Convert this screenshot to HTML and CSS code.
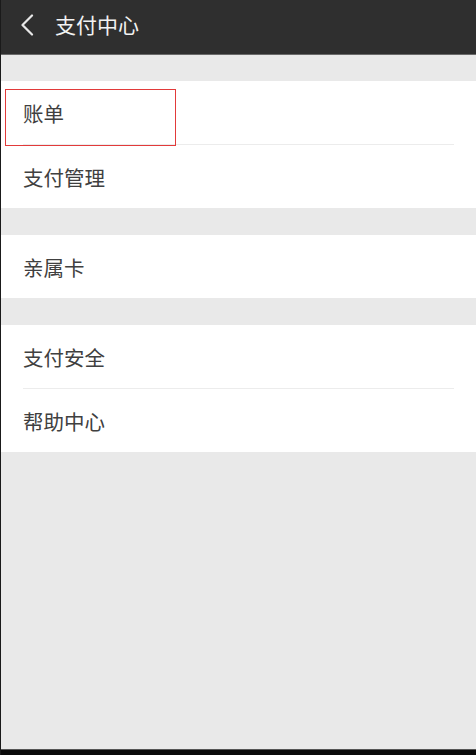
FILE: index.html
```html
<!DOCTYPE html>
<html lang="zh">
<head>
<meta charset="utf-8">
<title>支付中心</title>
<link rel="stylesheet" href="styles.css">
</head>
<body>
<div class="screen">
  <header class="topbar">
    <span class="back">
      <svg width="14" height="22" viewBox="0 0 14 22"><path d="M12 1.5 L2.5 11 L12 20.5" fill="none" stroke="#e8e8e8" stroke-width="2.2" stroke-linecap="round" stroke-linejoin="round"/></svg>
    </span>
    <span class="title">支付中心</span>
  </header>
  <div class="gap"></div>
  <section class="group">
    <div class="row row-focus"><span class="label">账单</span><span class="focus"></span></div>
    <div class="row"><span class="label">支付管理</span></div>
  </section>
  <div class="gap"></div>
  <section class="group">
    <div class="row"><span class="label">亲属卡</span></div>
  </section>
  <div class="gap"></div>
  <section class="group">
    <div class="row"><span class="label">支付安全</span></div>
    <div class="row"><span class="label">帮助中心</span></div>
  </section>
  <div class="fill"></div>
  <div class="bottombar"></div>
</div>
</body>
</html>
```
FILE: styles.css
```css
html, body {
  margin: 0;
  padding: 0;
  height: 100%;
}
body {
  font-family: "Noto Sans CJK SC", "Noto Sans", sans-serif;
  background: #e9e9e9;
}
.screen {
  display: flex;
  flex-direction: column;
  height: 755px;
  border-left: 1px solid #1a1a1a;
  box-sizing: border-box;
  background: #e9e9e9;
}
.topbar {
  height: 55px;
  padding-bottom: 6px;
  background: #2f2f2f;
  border-bottom: 1px solid #6a6a6a;
  display: flex;
  align-items: center;
  box-sizing: border-box;
  flex: none;
}
.back {
  display: flex;
  width: 14px;
  height: 22px;
  margin-left: 19px;
  margin-top: 1px;
}
.title {
  margin-left: 21px;
  color: #f2f2f2;
  font-size: 21px;
  line-height: 1;
}
.gap {
  height: 27px;
  flex: none;
}
.topbar + .gap {
  height: 26px;
}
.group {
  background: #ffffff;
  flex: none;
}
.row {
  position: relative;
  height: 63px;
  box-sizing: border-box;
  padding-top: 2px;
  display: flex;
  align-items: center;
  padding-left: 22px;
}
.row + .row {
  height: 64px;
  border-top: 1px solid #ececec;
  margin-left: 22px;
  margin-right: 22px;
  padding-left: 0;
}
.label {
  font-size: 20.5px;
  color: #404040;
  line-height: 1;
}
.focus {
  position: absolute;
  z-index: 2;
  left: 4px;
  top: 8px;
  width: 171px;
  height: 57px;
  border: 1px solid #e23a3a;
  box-sizing: border-box;
}
.fill {
  flex: 1;
}
.bottombar {
  height: 5px;
  background: #0a0a0a;
  border-top: 1px solid #555;
  flex: none;
}
```
